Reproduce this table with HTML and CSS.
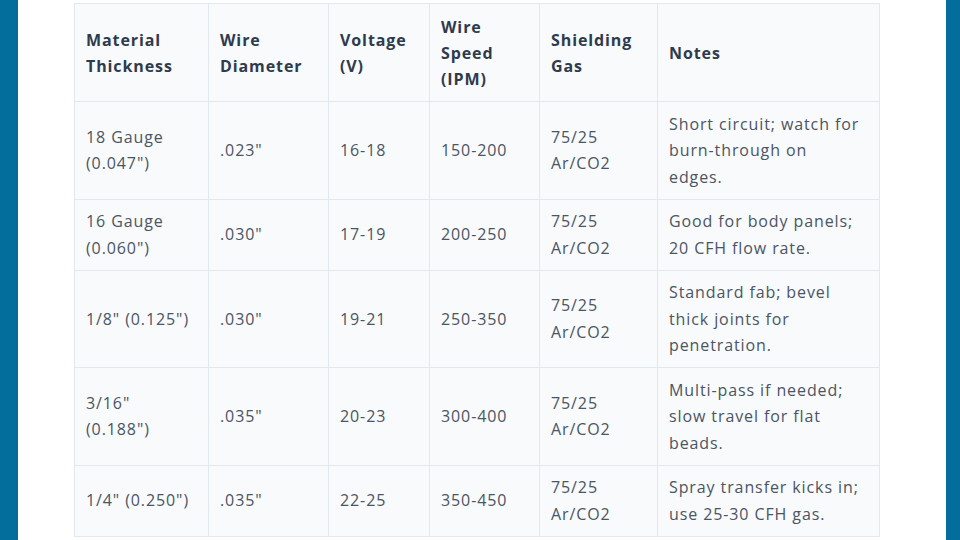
FILE: index.html
```html
<!DOCTYPE html>
<html lang="en">
<head>
<meta charset="utf-8">
<title>MIG Settings</title>
<link rel="stylesheet" href="styles.css">
</head>
<body>
<div class="frame">
  <div class="bar bar-left"></div>
  <main class="content">
    <table class="chart">
      <colgroup>
        <col class="c1"><col class="c2"><col class="c3"><col class="c4"><col class="c5"><col class="c6">
      </colgroup>
      <thead>
        <tr>
          <th>Material Thickness</th>
          <th>Wire Diameter</th>
          <th>Voltage (V)</th>
          <th>Wire Speed (IPM)</th>
          <th>Shielding Gas</th>
          <th>Notes</th>
        </tr>
      </thead>
      <tbody>
        <tr>
          <td>18 Gauge (0.047")</td>
          <td>.023"</td>
          <td>16-18</td>
          <td>150-200</td>
          <td>75/25 Ar/CO2</td>
          <td class="note">Short circuit; watch for burn-through on edges.</td>
        </tr>
        <tr>
          <td>16 Gauge (0.060")</td>
          <td>.030"</td>
          <td>17-19</td>
          <td>200-250</td>
          <td>75/25 Ar/CO2</td>
          <td class="note">Good for body panels; 20 CFH flow rate.</td>
        </tr>
        <tr>
          <td>1/8" (0.125")</td>
          <td>.030"</td>
          <td>19-21</td>
          <td>250-350</td>
          <td>75/25 Ar/CO2</td>
          <td class="note">Standard fab; bevel thick joints for penetration.</td>
        </tr>
        <tr>
          <td>3/16" (0.188")</td>
          <td>.035"</td>
          <td>20-23</td>
          <td>300-400</td>
          <td>75/25 Ar/CO2</td>
          <td class="note">Multi-pass if needed; slow travel for flat beads.</td>
        </tr>
        <tr>
          <td>1/4" (0.250")</td>
          <td>.035"</td>
          <td>22-25</td>
          <td>350-450</td>
          <td>75/25 Ar/CO2</td>
          <td class="note">Spray transfer kicks in; use 25-30 CFH gas.</td>
        </tr>
      </tbody>
    </table>
  </main>
  <div class="bar bar-right"></div>
</div>
</body>
</html>
```
FILE: styles.css
```css
html, body {
  margin: 0;
  padding: 0;
  background: #ffffff;
}
body {
  font-family: "Open Sans", "Noto Sans", sans-serif;
  width: 960px;
  height: 540px;
  overflow: hidden;
}
.frame {
  display: flex;
  height: 540px;
}
.bar {
  background: #036e9c;
  flex: none;
}
.bar-left { width: 18px; }
.bar-right { width: 14px; }
.content {
  flex: 1;
  padding: 3px 0 0 56px;
}
.chart {
  border-collapse: collapse;
  table-layout: fixed;
  width: 805px;
  background: #f8fafc;
  font-size: 16px;
  letter-spacing: 0.9px;
  color: #4b5563;
}
.c1 { width: 134px; }
.c2 { width: 120px; }
.c3 { width: 101px; }
.c4 { width: 110px; }
.c5 { width: 118px; }
.c6 { width: 222px; }
.chart th,
.chart td {
  border: 1px solid #e2e8f0;
  text-align: left;
  vertical-align: middle;
  padding: 8.5px 11px;
  line-height: 26.5px;
}
.chart .note {
  padding-right: 16px;
}
.chart th {
  font-weight: 700;
  color: #2f3b4c;
  line-height: 26px;
  padding: 10px 11px 9px;
}
```
